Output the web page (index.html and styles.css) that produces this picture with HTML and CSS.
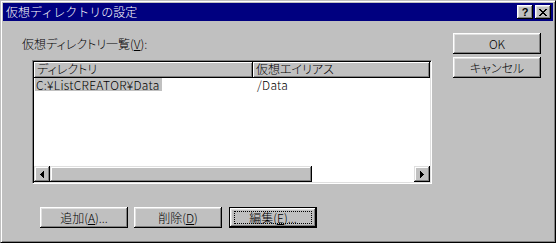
FILE: index.html
```html
<!DOCTYPE html>
<html lang="ja">
<head>
<meta charset="utf-8">
<title>仮想ディレクトリの設定</title>
<link rel="stylesheet" href="styles.css">
</head>
<body>
<div class="window">
  <div class="titlebar">
    <span class="title">仮想ディレクトリの設定</span>
    <div class="tbtns">
      <span class="tbtn help">?</span>
      <span class="tbtn close">
        <svg width="8" height="7" viewBox="0 0 8 7" shape-rendering="crispEdges">
          <path d="M0 0h2v1h-2zM6 0h2v1h-2zM1 1h2v1h-2zM5 1h2v1h-2zM2 2h4v1h-4zM3 3h2v1h-2zM2 4h4v1h-4zM1 5h2v1h-2zM5 5h2v1h-2zM0 6h2v1h-2zM6 6h2v1h-2z" fill="#000"/>
        </svg>
      </span>
    </div>
  </div>
  <div class="content">
    <div class="left">
      <div class="label">仮想ディレクトリ一覧(<u>V</u>):</div>
      <div class="listview">
        <div class="header">
          <div class="hcell c1">ディレクトリ</div>
          <div class="hcell c2">仮想エイリアス</div>
        </div>
        <div class="rows">
          <div class="row">
            <span class="cell c1"><span class="sel">C:¥ListCREATOR¥Data</span></span>
            <span class="cell c2">/Data</span>
          </div>
        </div>
        <div class="hscroll">
          <span class="sbtn">
            <svg width="4" height="7" viewBox="0 0 4 7" shape-rendering="crispEdges"><path d="M3 0h1v7h-1zM2 1h1v5h-1zM1 2h1v3h-1zM0 3h1v1h-1z" fill="#000"/></svg>
          </span>
          <span class="track"><span class="thumb"></span></span>
          <span class="sbtn">
            <svg width="4" height="7" viewBox="0 0 4 7" shape-rendering="crispEdges"><path d="M0 0h1v7h-1zM1 1h1v5h-1zM2 2h1v3h-1zM3 3h1v1h-1z" fill="#000"/></svg>
          </span>
        </div>
      </div>
      <div class="bbtns">
        <button class="btn">追加(<u>A</u>)...</button>
        <button class="btn">削除(<u>D</u>)</button>
        <button class="btn default"><span class="focus">編集(<u>E</u>)...</span></button>
      </div>
    </div>
    <div class="right">
      <button class="btn">OK</button>
      <button class="btn">キャンセル</button>
    </div>
  </div>
</div>
</body>
</html>
```

FILE: styles.css
```css
* { box-sizing: border-box; }
html, body { margin: 0; padding: 0; background: #c0c0c0; }
body {
  font-family: "Noto Sans CJK JP", "Liberation Sans", sans-serif;
  font-size: 12px;
  font-weight: 300;
  font-feature-settings: "palt";
  color: #000;
}
.window {
  width: 556px;
  height: 243px;
  background: #c0c0c0;
  border: 1px solid;
  border-color: #c0c0c0 #000 #000 #c0c0c0;
  box-shadow: inset 1px 1px #fff, inset -1px -1px #808080;
  padding: 2px;
  display: flex;
  flex-direction: column;
}
.titlebar {
  height: 18px;
  background: #000080;
  color: #fff;
  display: flex;
  align-items: center;
  justify-content: space-between;
  padding: 0 2px 0 3px;
  line-height: 14px;
}
.title { font-feature-settings: normal; }
.tbtns { display: flex; gap: 2px; }
.tbtn {
  width: 16px;
  height: 14px;
  background: #c0c0c0;
  box-shadow: inset -1px -1px #000, inset 1px 1px #fff, inset -2px -2px #808080, inset 2px 2px #dfdfdf;
  display: flex;
  align-items: center;
  justify-content: center;
  color: #000;
}
.help {
  font-family: "Liberation Sans", sans-serif;
  font-weight: bold;
  font-size: 11px;
  line-height: 11px;
}
.content { flex: 1; display: flex; }
.left { padding: 16px 0 0 19px; }
.label { height: 14px; line-height: 14px; }
.listview {
  margin: 9px 0 0 10px;
  width: 400px;
  height: 124px;
  background: #fff;
  border: 1px solid;
  border-color: #808080 #fff #fff #808080;
  box-shadow: inset 1px 1px #000, inset -1px -1px #dfdfdf;
  padding: 1px;
  display: flex;
  flex-direction: column;
}
.header { display: flex; height: 16px; }
.hcell {
  height: 16px;
  background: #c0c0c0;
  box-shadow: inset -1px -1px #000, inset 1px 1px #fff, inset -2px -2px #808080;
  padding-left: 3px;
  line-height: 14px;
  white-space: nowrap;
}
.hcell.c1 { width: 219px; }
.hcell.c2 { flex: 1; }
.rows { flex: 1; }
.row { display: flex; height: 14px; line-height: 13px; white-space: nowrap; letter-spacing: 0.3px; }
.cell.c1 { width: 219px; padding-left: 1px; }
.cell.c2 { padding-left: 4px; }
.sel { background: #c0c0c0; padding: 0 2px 0 1px; display: inline-block; height: 13px; }
.hscroll { display: flex; height: 16px; }
.sbtn {
  width: 16px;
  height: 16px;
  background: #c0c0c0;
  box-shadow: inset -1px -1px #000, inset 1px 1px #dfdfdf, inset -2px -2px #808080, inset 2px 2px #fff;
  display: flex;
  align-items: center;
  justify-content: center;
}
.track { flex: 1; background: #fff; display: flex; }
.thumb {
  width: 262px;
  height: 16px;
  background: #c0c0c0;
  box-shadow: inset -1px -1px #000, inset 1px 1px #dfdfdf, inset -2px -2px #808080, inset 2px 2px #fff;
}
.bbtns { margin: 23px 0 0 18px; display: flex; gap: 6px; }
.btn {
  width: 88px;
  height: 21px;
  margin: 0;
  padding: 0;
  border: none;
  background: #c0c0c0;
  box-shadow: inset -1px -1px #000, inset 1px 1px #fff, inset -2px -2px #808080, inset 2px 2px #dfdfdf;
  display: flex;
  align-items: center;
  justify-content: center;
  font: inherit;
  font-feature-settings: "palt";
  color: #000;
  line-height: 13px;
}
.btn.default {
  border: 1px solid #000;
  margin-left: 1px;
}
.focus {
  display: flex;
  align-items: center;
  justify-content: center;
  width: 78px;
  height: 13px;
  border: 1px dotted #000;
}
.right {
  margin-left: auto;
  padding: 12px 12px 0 0;
  display: flex;
  flex-direction: column;
  gap: 3px;
}
```
